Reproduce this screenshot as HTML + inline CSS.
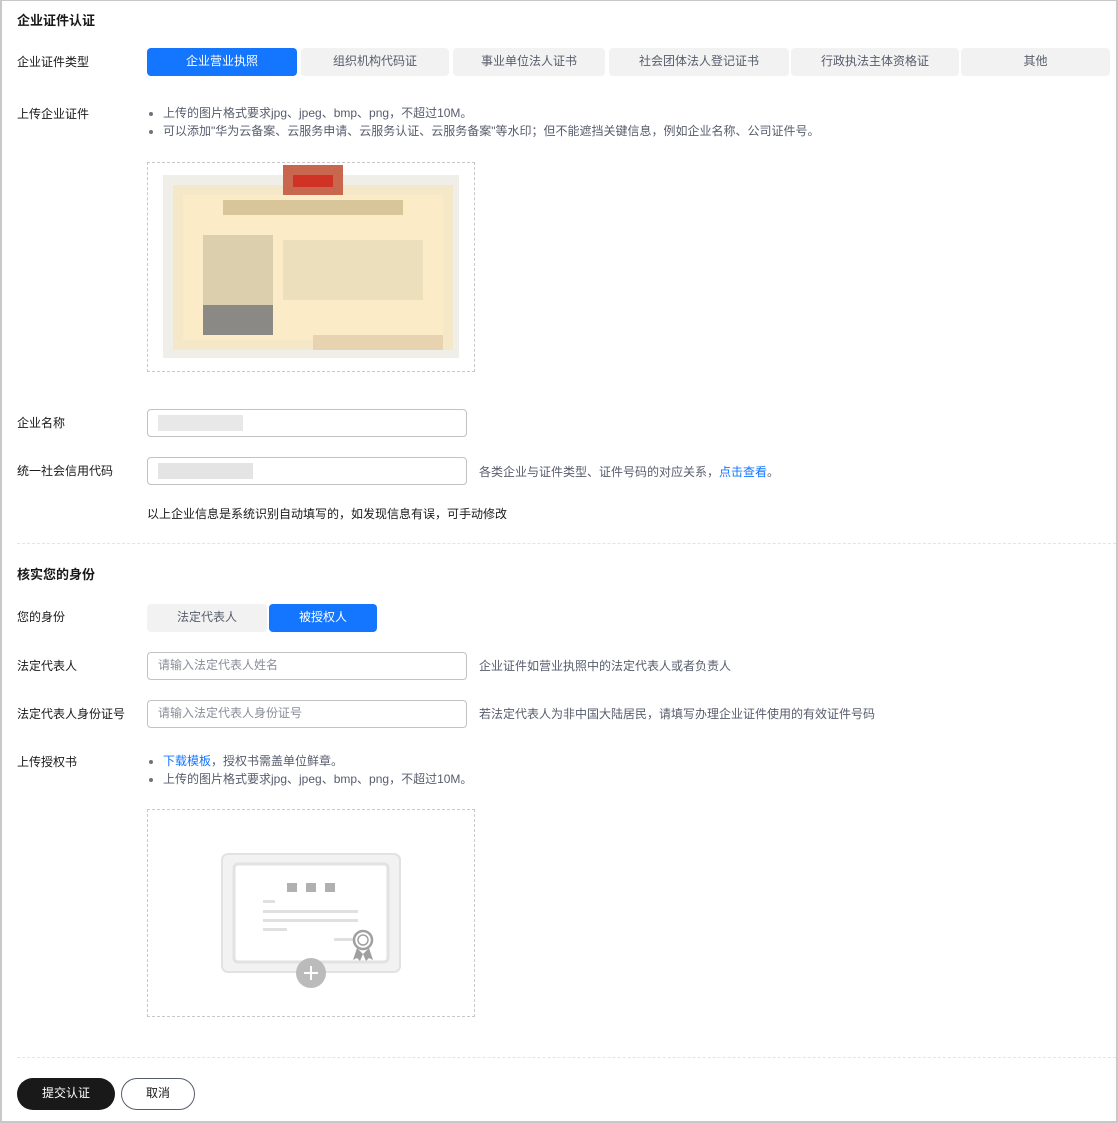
<!DOCTYPE html>
<html><head><meta charset="utf-8"><style>
*{margin:0;padding:0;box-sizing:border-box}
body{width:1118px;height:1123px;background:#fff;font-family:"Liberation Sans","Noto Sans CJK SC",sans-serif;font-size:12px;color:#252b3a;position:relative;overflow:hidden}
.frame{position:absolute;left:0;top:0;width:1118px;height:1123px;border:2px solid #c8c8c8;border-top:1px solid #c8c8c8}
.a{position:absolute;white-space:nowrap}
.h{font-size:13px;font-weight:bold;color:#191919}
.lab{left:17px;color:#191919}
.tab{position:absolute;top:48px;height:28px;line-height:27px;text-align:center;background:#f2f2f2;border-radius:4px;color:#575d6c}
.tab.on{background:#1476ff;color:#fff}
.inp{position:absolute;left:147px;width:320px;height:28px;border:1px solid #c2c2c2;border-radius:4px;line-height:25px;padding-left:10px;color:#8a8e99}
.tip{left:479px;color:#575d6c}
ul{list-style:none}
li{position:relative;padding-left:16px;line-height:18px;color:#575d6c}
li:before{content:"";position:absolute;left:2px;top:8px;width:4px;height:4px;border-radius:50%;background:#6f737d}
.box{position:absolute;left:147px;width:328px;border:1px dashed #c8c8c8}
.sep{position:absolute;left:17px;right:2px;border-top:1px dashed #e4e4e4}
.px{position:absolute}
</style></head><body>
<div class="frame"></div>
<div class="a h" style="left:17px;top:10px">企业证件认证</div>
<div class="a lab" style="top:53px">企业证件类型</div>
<div class="tab on" style="left:147px;width:150px">企业营业执照</div>
<div class="tab" style="left:301px;width:148px">组织机构代码证</div>
<div class="tab" style="left:453px;width:152px">事业单位法人证书</div>
<div class="tab" style="left:609px;width:180px">社会团体法人登记证书</div>
<div class="tab" style="left:791px;width:168px">行政执法主体资格证</div>
<div class="tab" style="left:961px;width:149px">其他</div>

<div class="a lab" style="top:105px">上传企业证件</div>
<ul class="a" style="left:147px;top:104px">
<li>上传的图片格式要求jpg、jpeg、bmp、png，不超过10M。</li>
<li>可以添加"华为云备案、云服务申请、云服务认证、云服务备案"等水印；但不能遮挡关键信息，例如企业名称、公司证件号。</li>
</ul>
<div class="box" style="top:162px;height:210px"></div>
<div class="px" style="left:163px;top:175px;width:296px;height:183px;background:#f0eee8"></div>
<div class="px" style="left:173px;top:185px;width:280px;height:165px;background:#f5e8c8"></div>
<div class="px" style="left:183px;top:195px;width:260px;height:145px;background:#fbebc6"></div>
<div class="px" style="left:283px;top:165px;width:60px;height:30px;background:#c9664e"></div>
<div class="px" style="left:293px;top:175px;width:40px;height:12px;background:#d03326"></div>
<div class="px" style="left:223px;top:200px;width:180px;height:15px;background:#d8c69a"></div>
<div class="px" style="left:203px;top:235px;width:70px;height:70px;background:#dccfae"></div>
<div class="px" style="left:203px;top:305px;width:70px;height:30px;background:#8a8985"></div>
<div class="px" style="left:283px;top:240px;width:140px;height:60px;background:#ecdfbc"></div>
<div class="px" style="left:313px;top:335px;width:130px;height:15px;background:#e8d3b0"></div>

<div class="a lab" style="top:414px">企业名称</div>
<div class="inp" style="top:409px"><span style="display:inline-block;margin-top:5px;width:85px;height:16px;background:#e8e8e8"></span></div>
<div class="a lab" style="top:462px">统一社会信用代码</div>
<div class="inp" style="top:457px"><span style="display:inline-block;margin-top:5px;width:95px;height:16px;background:#e4e4e4"></span></div>
<div class="a tip" style="top:463px">各类企业与证件类型、证件号码的对应关系，<span style="color:#1476ff">点击查看</span>。</div>
<div class="a" style="left:147px;top:505px;color:#191919">以上企业信息是系统识别自动填写的，如发现信息有误，可手动修改</div>
<div class="sep" style="top:543px"></div>

<div class="a h" style="left:17px;top:564px">核实您的身份</div>
<div class="a lab" style="top:608px">您的身份</div>
<div class="tab" style="left:147px;top:604px;width:120px">法定代表人</div>
<div class="tab on" style="left:269px;top:604px;width:108px">被授权人</div>
<div class="a lab" style="top:657px">法定代表人</div>
<div class="inp" style="top:652px">请输入法定代表人姓名</div>
<div class="a tip" style="top:657px">企业证件如营业执照中的法定代表人或者负责人</div>
<div class="a lab" style="top:705px">法定代表人身份证号</div>
<div class="inp" style="top:700px">请输入法定代表人身份证号</div>
<div class="a tip" style="top:705px">若法定代表人为非中国大陆居民，请填写办理企业证件使用的有效证件号码</div>
<div class="a lab" style="top:753px">上传授权书</div>
<ul class="a" style="left:147px;top:752px">
<li><span style="color:#1476ff">下载模板</span>，授权书需盖单位鲜章。</li>
<li>上传的图片格式要求jpg、jpeg、bmp、png，不超过10M。</li>
</ul>
<div class="box" style="top:809px;height:208px"></div>
<svg class="px" style="left:220px;top:852px" width="182" height="140" viewBox="0 0 182 140">
<rect x="2" y="2" width="178" height="118" rx="6" fill="#f2f2f2" stroke="#e2e2e2" stroke-width="2"/>
<rect x="14" y="12" width="154" height="98" rx="4" fill="#fff" stroke="#e2e2e2" stroke-width="3"/>
<rect x="67" y="31" width="10" height="9" fill="#b0b0b0"/><rect x="86" y="31" width="10" height="9" fill="#b0b0b0"/><rect x="105" y="31" width="10" height="9" fill="#b0b0b0"/>
<rect x="43" y="48" width="12" height="3" fill="#e0e0e0"/>
<rect x="43" y="58" width="95" height="3" fill="#e0e0e0"/><rect x="43" y="67" width="95" height="3" fill="#e0e0e0"/><rect x="43" y="76" width="24" height="3" fill="#e0e0e0"/>
<rect x="114" y="86" width="22" height="3" fill="#e0e0e0"/>
<path d="M137 96 l-4 12 4-2 3 3 3-7z M149 96 l4 12-4-2-3 3-3-7z" fill="#a0a0a0"/>
<circle cx="143" cy="88" r="9" fill="#fff" stroke="#a0a0a0" stroke-width="2.5"/><circle cx="143" cy="88" r="5" fill="none" stroke="#a0a0a0" stroke-width="1.5"/>
<circle cx="91" cy="121" r="15" fill="#bbb"/>
<path d="M91 114v14M84 121h14" stroke="#fff" stroke-width="2"/>
</svg>
<div class="sep" style="top:1057px"></div>
<div class="a" style="left:17px;top:1078px;width:98px;height:32px;border-radius:16px;background:#191919;color:#fff;line-height:31px;text-align:center">提交认证</div>
<div class="a" style="left:121px;top:1078px;width:74px;height:32px;border-radius:16px;border:1px solid #575d6c;color:#191919;line-height:29px;text-align:center">取消</div>
</body></html>
